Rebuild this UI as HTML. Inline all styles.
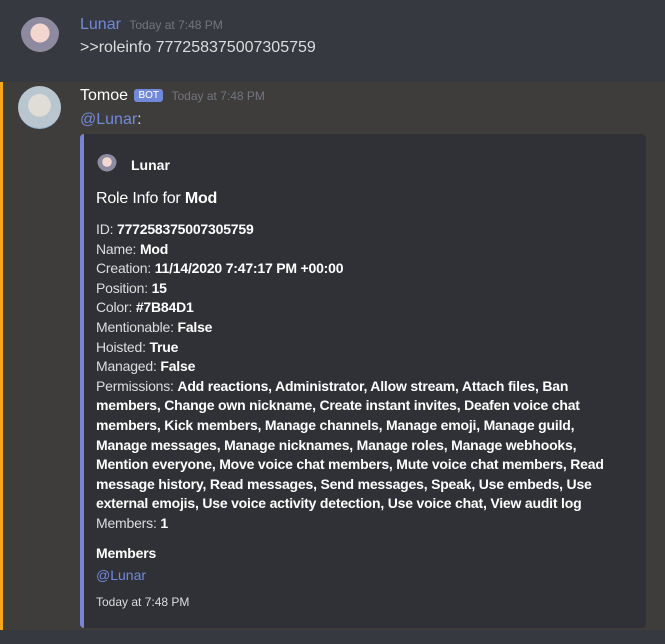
<!DOCTYPE html>
<html><head><meta charset="utf-8"><style>
*{margin:0;padding:0;box-sizing:border-box}
body{width:665px;height:644px;background:#36393f;font-family:"Liberation Sans",sans-serif;color:#dcddde;position:relative;overflow:hidden}
.abs{position:absolute;white-space:nowrap}
.hl{position:absolute;left:0;top:82px;width:665px;height:548px;background:#3f3d3b}
.bar{position:absolute;left:0;top:82px;width:3px;height:548px;background:#faa61a}
.av{position:absolute;border-radius:50%}
.embed{position:absolute;left:80px;top:134px;width:566px;height:494px;background:#2f3136;border-left:4px solid #7b84d1;border-radius:4px}
.f{font-size:14px;line-height:19.6px;letter-spacing:-0.2px;color:#dcddde}
.f b{color:#fff}
.ts{font-size:12px;color:#72767d}
</style></head><body>
<div class="av" style="left:20px;top:17px;width:40px;height:40px;background:radial-gradient(circle at 50% 40%,#f2d6cf 0 30%,#8e8aa0 31% 60%,#36393f 61%)"></div>
<div class="abs" style="left:80px;top:16px;font-size:16px;color:#7289da">Lunar <span class="ts" style="margin-left:4px">Today at 7:48 PM</span></div>
<div class="abs" style="left:80px;top:39px;font-size:16px;color:#dcddde">&gt;&gt;roleinfo 777258375007305759</div>
<div class="hl"></div><div class="bar"></div>
<div class="av" style="left:18px;top:86px;width:43px;height:43px;background:radial-gradient(circle at 50% 45%,#e0dcd6 0 35%,#b9c6cf 36% 70%,#8fb5d6 71%)"></div>
<div class="abs" style="left:80px;top:87px;font-size:16px;color:#fff">Tomoe <span style="display:inline-block;background:#7289da;color:#fff;font-size:10px;padding:1px 4px;border-radius:3px;vertical-align:2px;margin-left:2px">BOT</span> <span class="ts" style="margin-left:4px">Today at 7:48 PM</span></div>
<div class="abs" style="left:80px;top:111px;font-size:16px;color:#7289da">@Lunar<span style="color:#dcddde">:</span></div>
<div class="embed">
<div class="av" style="left:13px;top:20px;width:20px;height:20px;background:radial-gradient(circle at 50% 40%,#f2d6cf 0 30%,#8e8aa0 31% 60%,#2f3136 61%)"></div>
<div class="abs" style="left:47px;top:23px;font-size:14px;font-weight:bold;color:#fff">Lunar</div>
<div class="abs" style="left:12px;top:56px;font-size:16px;color:#fff;letter-spacing:-0.2px">Role Info for <b>Mod</b></div>
<div class="abs f" style="left:12px;top:86px">ID: <b>777258375007305759</b><br>Name: <b>Mod</b><br>Creation: <b>11/14/2020 7:47:17 PM +00:00</b><br>Position: <b>15</b><br>Color: <b>#7B84D1</b><br>Mentionable: <b>False</b><br>Hoisted: <b>True</b><br>Managed: <b>False</b><br>Permissions: <b>Add reactions, Administrator, Allow stream, Attach files, Ban<br>members, Change own nickname, Create instant invites, Deafen voice chat<br>members, Kick members, Manage channels, Manage emoji, Manage guild,<br>Manage messages, Manage nicknames, Manage roles, Manage webhooks,<br>Mention everyone, Move voice chat members, Mute voice chat members, Read<br>message history, Read messages, Send messages, Speak, Use embeds, Use<br>external emojis, Use voice activity detection, Use voice chat, View audit log</b><br>Members: <b>1</b></div>
<div class="abs" style="left:12px;top:411px;font-size:14px;font-weight:bold;color:#fff;letter-spacing:-0.2px">Members</div>
<div class="abs" style="left:12px;top:433px;font-size:14px;color:#7289da">@Lunar</div>
<div class="abs" style="left:12px;top:461px;font-size:12px;color:#dcddde">Today at 7:48 PM</div>
</div>
</body></html>
